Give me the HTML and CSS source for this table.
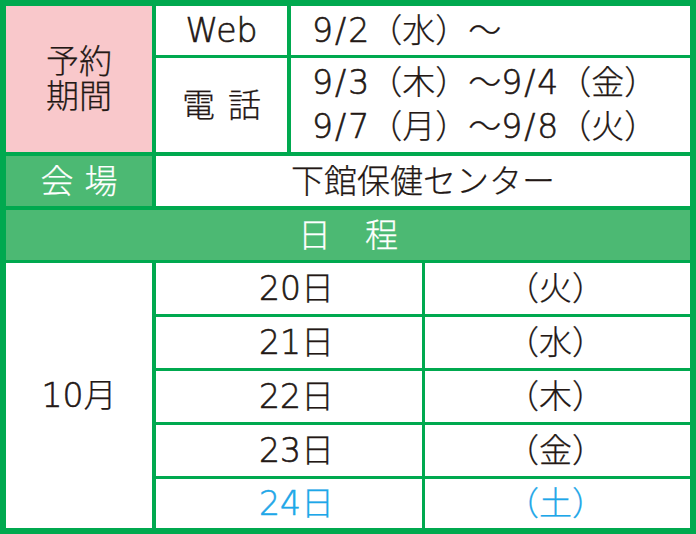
FILE: index.html
```html
<!DOCTYPE html>
<html lang="ja">
<head>
<meta charset="utf-8">
<title>予約期間</title>
<link rel="stylesheet" href="styles.css">
</head>
<body>
<div class="table">
  <div class="sec-top">
    <div class="cell pink label2"><span>予約</span><span>期間</span></div>
    <div class="cell"><span class="n">Web</span></div>
    <div class="cell left"><span class="n">9<span class="sl">/</span>2</span>（水）～</div>
    <div class="cell spaced-tel"><span>電</span><span>話</span></div>
    <div class="cell left two">
      <span class="line"><span class="n">9<span class="sl">/</span>3</span>（木）～<span class="n">9<span class="sl">/</span>4</span>（金）</span>
      <span class="line"><span class="n">9<span class="sl">/</span>7</span>（月）～<span class="n">9<span class="sl">/</span>8</span>（火）</span>
    </div>
  </div>
  <div class="sec-venue">
    <div class="cell green spaced-venue"><span>会</span><span>場</span></div>
    <div class="cell">下館保健センター</div>
  </div>
  <div class="sec-head cell green spaced-head"><span>日</span><span>程</span></div>
  <div class="sec-days">
    <div class="cell month"><span class="n">10</span>月</div>
    <div class="days">
      <div class="cell date"><span class="n">20</span>日</div><div class="cell dow">（火）</div>
      <div class="cell date"><span class="n">21</span>日</div><div class="cell dow">（水）</div>
      <div class="cell date"><span class="n">22</span>日</div><div class="cell dow">（木）</div>
      <div class="cell date"><span class="n">23</span>日</div><div class="cell dow">（金）</div>
      <div class="cell date sat"><span class="n">24</span>日</div><div class="cell dow sat">（土）</div>
    </div>
  </div>
</div>
</body>
</html>
```
FILE: styles.css
```css
html, body {
  margin: 0;
  padding: 0;
  background: #ffffff;
}
.table {
  width: 696px;
  height: 534px;
  box-sizing: border-box;
  padding: 6px;
  background: #00a94f;
  display: flex;
  flex-direction: column;
  font-family: "DejaVu Sans", "Noto Sans CJK JP", sans-serif;
  font-size: 33px;
  font-weight: 300;
  -webkit-text-stroke: 0.25px currentColor;
  color: #231815;
  line-height: 1;
}
.n {
  font-weight: 200;
  -webkit-text-stroke: 0.6px currentColor;
}
.cell {
  background: #ffffff;
  display: flex;
  align-items: center;
  justify-content: center;
  white-space: nowrap;
}
.sl {
  padding: 0 2px;
}
.sec-top {
  display: grid;
  grid-template-columns: 146px 131px 399px;
  grid-template-rows: 49px 94px;
  column-gap: 4px;
  row-gap: 3px;
}
.sec-top .pink {
  grid-row: 1 / span 2;
}
.pink {
  background: #f9c8cb;
}
.label2 {
  flex-direction: column;
  line-height: 35px;
}
.left {
  justify-content: flex-start;
  padding-left: 21px;
}
.two {
  flex-direction: column;
  align-items: flex-start;
  justify-content: center;
  line-height: 44px;
}
.spaced-tel {
  gap: 13px;
}
.spaced-venue {
  gap: 11px;
}
.spaced-head {
  gap: 34px;
}
.sec-venue {
  margin-top: 4px;
  display: grid;
  grid-template-columns: 146px 534px;
  column-gap: 4px;
  height: 50px;
}
.green {
  background: #4cb973;
  color: #ffffff;
}
.sec-head {
  margin-top: 4px;
  height: 50px;
}
.sec-days {
  margin-top: 3px;
  display: flex;
  gap: 4px;
  flex: 1;
}
.month {
  width: 146px;
}
.days {
  flex: 1;
  display: grid;
  grid-template-columns: 266px 265px;
  grid-template-rows: 51px 51px 51px 51px 49px;
  column-gap: 3px;
  row-gap: 3px;
}
.date {
  padding-left: 15px;
}
.dow {
  padding-right: 4px;
}
.sat {
  color: #1ea7e8;
}
```
